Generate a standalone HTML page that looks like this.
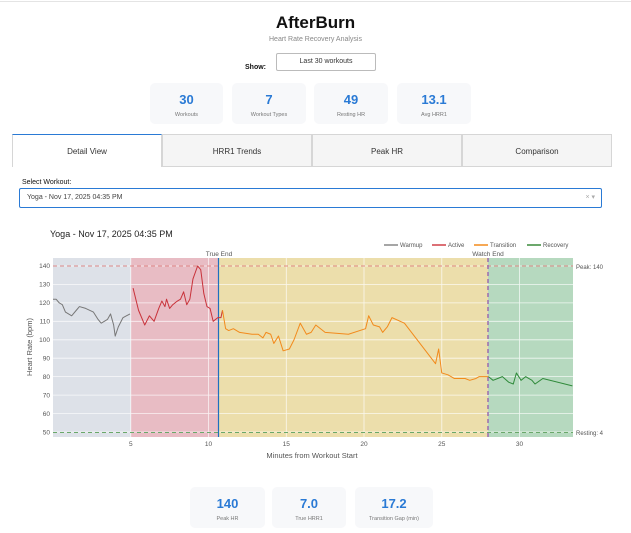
<!DOCTYPE html>
<html><head><meta charset="utf-8"><style>
*{box-sizing:border-box;margin:0;padding:0}
body{width:631px;height:533px;background:#fff;font-family:"Liberation Sans",sans-serif;position:relative;overflow:hidden;color:#333}
.abs{position:absolute}
.card{position:absolute;background:#f7f8fa;border-radius:5px;text-align:center}
.card b{display:block;color:#2a7ad5;font-size:13px;margin-top:9px}
.card span{display:block;font-size:5.5px;color:#777;margin-top:5px}
.tab{position:absolute;top:134px;height:33px;width:150px;border:1px solid #d6d6d6;background:#f5f5f5;font-size:8px;text-align:center;line-height:33px;color:#333}
svg text{font-family:"Liberation Sans",sans-serif}
</style></head><body>
<div class="abs" style="left:0;top:1px;width:631px;height:1px;background:#e4e4e4"></div>
<div class="abs" style="left:0;top:13px;width:631px;text-align:center;font-weight:bold;font-size:17px;color:#111">AfterBurn</div>
<div class="abs" style="left:0;top:36px;width:631px;text-align:center;font-size:7px;color:#888">Heart Rate Recovery Analysis</div>
<div class="abs" style="left:245px;top:64px;font-size:7px;font-weight:bold;color:#111">Show:</div>
<div class="abs" style="left:276px;top:53px;width:100px;height:18px;border:1px solid #bbb;border-radius:2px;font-size:7px;text-align:center;line-height:16px">Last 30 workouts</div>
<div class="card" style="left:150px;top:83px;width:73px;height:41px"><b>30</b><span>Workouts</span></div>
<div class="card" style="left:232px;top:83px;width:74px;height:41px"><b>7</b><span>Workout Types</span></div>
<div class="card" style="left:314px;top:83px;width:74px;height:41px"><b>49</b><span>Resting HR</span></div>
<div class="card" style="left:397px;top:83px;width:74px;height:41px"><b>13.1</b><span>Avg HRR1</span></div>
<div class="tab" style="left:12px;background:#fff;border-top:1px solid #2a7ad5;border-bottom:none">Detail View</div>
<div class="tab" style="left:162px">HRR1 Trends</div>
<div class="tab" style="left:312px">Peak HR</div>
<div class="tab" style="left:462px;width:150px">Comparison</div>
<div class="abs" style="left:22px;top:179px;font-size:7px;color:#111">Select Workout:</div>
<div class="abs" style="left:19px;top:188px;width:583px;height:20px;border:1px solid #2a7ad5;border-radius:2px;font-size:7px;line-height:18px;padding-left:7px;color:#444">Yoga - Nov 17, 2025 04:35 PM<span style="position:absolute;right:6px;color:#aaa">× ▾</span></div>
<svg class="abs" style="left:0;top:0" width="631" height="533">
<text x="50" y="237" font-size="9" fill="#222">Yoga - Nov 17, 2025 04:35 PM</text>
<rect x="53" y="258" width="78" height="179" fill="#dde1e8"/>
<rect x="131" y="258" width="87" height="179" fill="#e8bcc4"/>
<rect x="218" y="258" width="270" height="179" fill="#ecdeab"/>
<rect x="488" y="258" width="85" height="179" fill="#b6d9bf"/>
<g stroke="#fff" stroke-width="0.8" opacity="0.8">
<line x1="53" x2="573" y1="266" y2="266"/><line x1="53" x2="573" y1="284.4" y2="284.4"/><line x1="53" x2="573" y1="302.9" y2="302.9"/><line x1="53" x2="573" y1="321.3" y2="321.3"/><line x1="53" x2="573" y1="339.8" y2="339.8"/><line x1="53" x2="573" y1="358.2" y2="358.2"/><line x1="53" x2="573" y1="376.6" y2="376.6"/><line x1="53" x2="573" y1="395.1" y2="395.1"/><line x1="53" x2="573" y1="413.5" y2="413.5"/><line x1="53" x2="573" y1="432" y2="432"/>
<line x1="130.8" x2="130.8" y1="258" y2="437"/><line x1="208.5" x2="208.5" y1="258" y2="437"/><line x1="286.3" x2="286.3" y1="258" y2="437"/><line x1="364" x2="364" y1="258" y2="437"/><line x1="441.8" x2="441.8" y1="258" y2="437"/><line x1="519.5" x2="519.5" y1="258" y2="437"/>
</g>
<line x1="53" x2="573" y1="266" y2="266" stroke="#e08a8a" stroke-dasharray="4,3" stroke-width="1"/>
<line x1="53" x2="573" y1="432.5" y2="432.5" stroke="#6aa86a" stroke-dasharray="4,3" stroke-width="1"/>
<line x1="218.5" x2="218.5" y1="258" y2="437" stroke="#1f6fc0" stroke-width="1.2"/>
<line x1="488" x2="488" y1="258" y2="437" stroke="#9b6bb0" stroke-dasharray="4,3" stroke-width="1.5"/>
<g transform="translate(53,524.16) scale(15.55,-1.844)" fill="none" stroke-width="1" stroke-linejoin="round">
<polyline vector-effect="non-scaling-stroke" stroke="#777" points="0,122 0.2,122 0.4,120 0.6,119 0.8,115 1.2,113 1.5,116 1.7,118 2.1,117 2.6,115 2.9,111 3.1,109 3.5,111 3.7,114 3.9,108 4.0,102 4.2,107 4.5,112 4.95,114"/>
<polyline vector-effect="non-scaling-stroke" stroke="#c8323a" points="5.15,128 5.5,116 5.9,108 6.2,113 6.5,110 6.8,117 7.0,121 7.2,118 7.3,122 7.5,117 7.7,119 8.0,121 8.2,122 8.4,126 8.6,119 8.8,122 9.0,133 9.3,140 9.5,138 9.7,125 9.9,118 10.1,117 10.3,110 10.6,112 10.8,112 10.9,116"/>
<polyline vector-effect="non-scaling-stroke" stroke="#f28a1c" points="10.9,116 11.1,106 11.3,105 11.6,106 12,104 12.8,103 13.2,103 13.5,101 13.7,104 14.0,103 14.2,98 14.5,102 14.8,94 15.2,95 15.5,100 15.9,109 16.3,103 16.6,104 16.9,108 17.5,104 19.0,103 20.1,106 20.3,113 20.6,108 21.0,107 21.2,104 21.5,107 21.8,112 22.6,109 24.6,87 24.8,95 25.0,82 25.4,81 25.8,79 26.5,79 26.8,78 27.2,79 27.4,80 27.8,80 28,80"/>
<polyline vector-effect="non-scaling-stroke" stroke="#2f8a3a" points="28,80 28.3,78 28.6,79 28.9,80 29.3,77 29.6,76 29.8,82 30.1,78 30.4,80 30.8,78 31.0,76 31.5,79 33.4,75"/>
</g>
<g font-size="6.5" fill="#555" text-anchor="end">
<text x="50" y="268">140</text><text x="50" y="286.5">130</text><text x="50" y="305">120</text><text x="50" y="323.5">110</text><text x="50" y="342">100</text><text x="50" y="360.5">90</text><text x="50" y="379">80</text><text x="50" y="397.5">70</text><text x="50" y="416">60</text><text x="50" y="434.5">50</text>
</g>
<g font-size="6.5" fill="#555" text-anchor="middle">
<text x="130.8" y="446">5</text><text x="208.5" y="446">10</text><text x="286.3" y="446">15</text><text x="364" y="446">20</text><text x="441.8" y="446">25</text><text x="519.5" y="446">30</text>
<text x="312" y="458" font-size="7.5">Minutes from Workout Start</text>
<text x="219" y="256">True End</text><text x="488" y="256">Watch End</text>
</g>
<text transform="translate(32,347) rotate(-90)" font-size="7.5" fill="#555" text-anchor="middle">Heart Rate (bpm)</text>
<text x="576" y="269" font-size="6" fill="#555">Peak: 140</text>
<text x="576" y="435" font-size="6" fill="#555">Resting: 4</text>
<g font-size="6" fill="#555">
<line x1="384" x2="398" y1="245" y2="245" stroke="#888" stroke-width="1.5"/><text x="400" y="247">Warmup</text>
<line x1="432" x2="446" y1="245" y2="245" stroke="#d04048" stroke-width="1.5"/><text x="448" y="247">Active</text>
<line x1="474" x2="488" y1="245" y2="245" stroke="#f28a1c" stroke-width="1.5"/><text x="490" y="247">Transition</text>
<line x1="527" x2="541" y1="245" y2="245" stroke="#3a8a3a" stroke-width="1.5"/><text x="543" y="247">Recovery</text>
</g>
</svg>
<div class="card" style="left:190px;top:487px;width:75px;height:41px"><b>140</b><span>Peak HR</span></div>
<div class="card" style="left:272px;top:487px;width:74px;height:41px"><b>7.0</b><span>True HRR1</span></div>
<div class="card" style="left:355px;top:487px;width:78px;height:41px"><b>17.2</b><span>Transition Gap (min)</span></div>
</body></html>
